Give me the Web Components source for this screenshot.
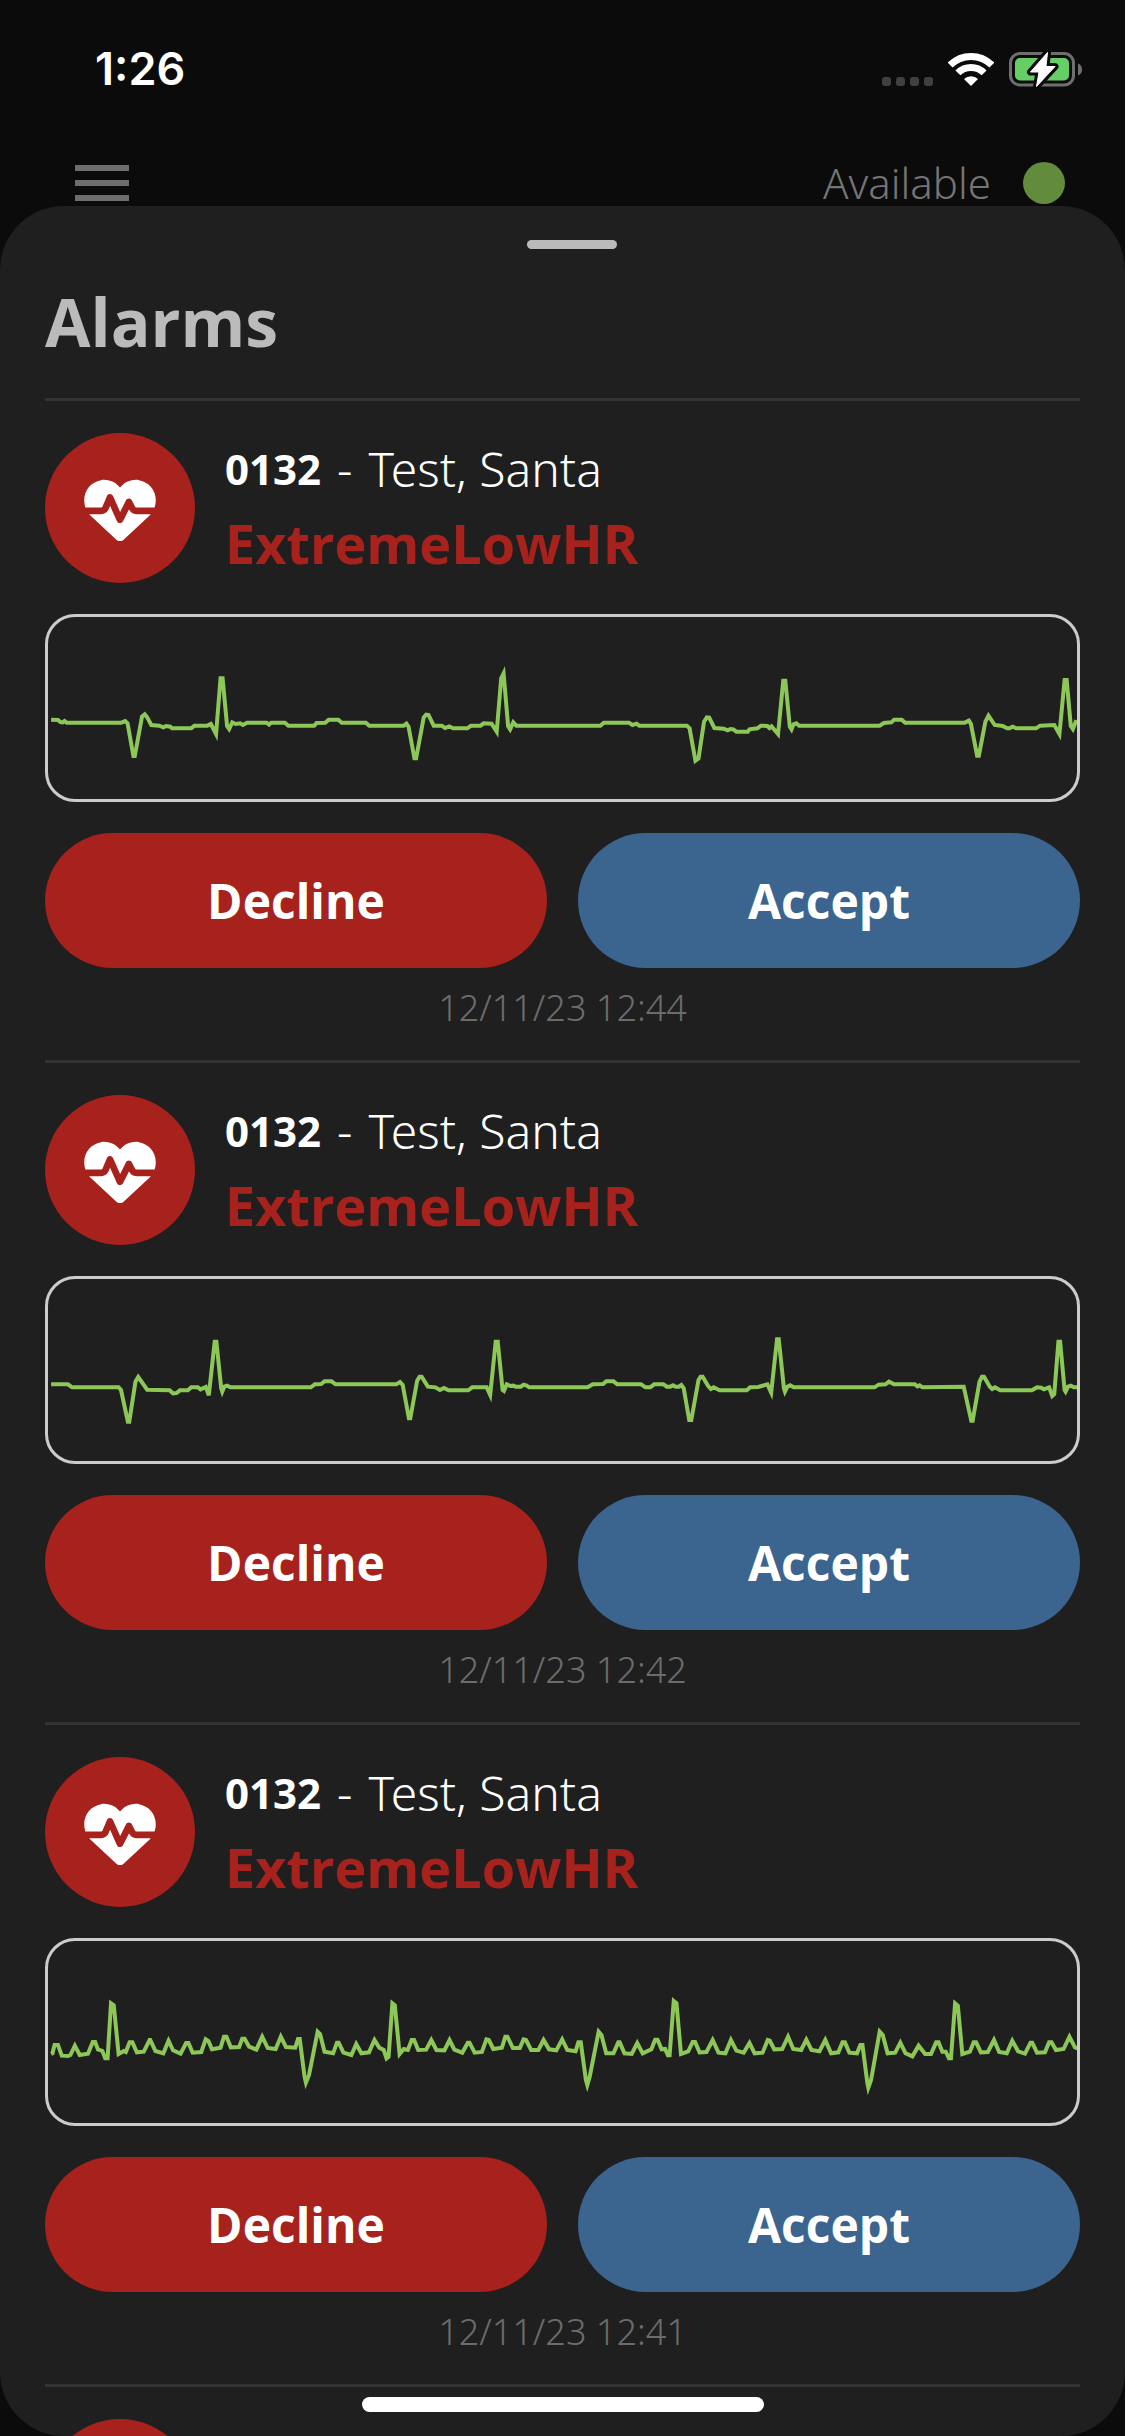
<!DOCTYPE html>
<html lang="en">
<head>
<meta charset="utf-8">
<meta name="viewport" content="width=device-width, initial-scale=1">
<title>Alarms</title>
<style>
  body {
    margin: 0;
    background: #0b0b0b;
    color: #fff;
    font-family: "Open Sans", "Noto Sans", sans-serif;
    --light: "Noto Sans", "Open Sans", sans-serif;
    --red: #a7211d;
  }
</style>
</head>
<body>
<alarm-app>
  <status-bar slot="status" time="1:26"></status-bar>
  <app-header slot="header">Available</app-header>
  <bottom-sheet heading="Alarms">
    <alarm-card room="0132" patient="Test, Santa" alarm="ExtremeLowHR" time="12/11/23 12:44">
      <ecg-trace points="61,359 81,360 88,366 95,367 100,363 106,368 265,368 276,363 283,370 300,468 304,468 325,350 333,343 340,352 352,375 375,377 387,382 395,378 407,380 412,385 468,385 477,377 515,377 525,372 540,402 553,235 559,235 572,378 578,387 587,367 597,372 610,370 618,375 630,368 687,368 694,374 700,368 740,368 750,377 825,377 832,369 857,368 867,359 895,359 905,368 975,368 985,377 1085,377 1093,371 1099,380 1116,475 1121,475 1143,352 1150,344 1157,345 1172,377 1195,377 1205,384 1217,379 1228,385 1270,385 1280,377 1308,377 1317,370 1340,371 1355,395 1368,235 1375,220 1388,378 1394,388 1403,367 1412,377 1656,377 1666,368 1739,368 1749,375 1761,371 1769,377 1907,377 1915,385 1932,482 1941,475 1957,365 1965,352 1972,353 1987,384 2014,386 2026,391 2034,387 2042,388 2051,395 2084,395 2089,388 2112,385 2122,377 2141,378 2147,384 2153,379 2172,402 2187,242 2193,242 2206,380 2211,388 2217,373 2225,370 2233,377 2467,377 2479,369 2501,367 2509,359 2531,359 2541,368 2714,368 2726,362 2732,372 2750,467 2755,467 2774,365 2783,347 2801,375 2824,378 2837,385 2844,385 2853,380 2864,385 2921,385 2933,377 2974,375 2989,402 3004,240 3010,240 3022,378 3028,387 3036,366 3042,368"></ecg-trace>
    </alarm-card>
    <alarm-card room="0132" patient="Test, Santa" alarm="ExtremeLowHR" time="12/11/23 12:42">
      <ecg-trace points="61,367 110,367 122,376 257,376 264,384 284,479 288,479 306,359 314,345 340,383 405,385 415,394 425,393 435,385 458,385 468,376 487,376 495,382 510,375 519,400 536,239 541,239 555,379 558,389 564,374 572,371 582,376 815,376 827,367 845,366 855,358 875,358 887,367 1063,367 1074,360 1082,369 1100,469 1104,469 1124,356 1131,344 1137,344 1155,374 1177,376 1190,384 1202,378 1215,385 1272,385 1284,376 1326,376 1336,399 1352,239 1358,239 1372,384 1376,387 1384,367 1395,372 1403,371 1410,374 1425,374 1433,368 1442,371 1449,376 1619,376 1634,367 1664,366 1673,358 1694,358 1705,367 1774,367 1787,376 1801,376 1812,367 1839,367 1849,374 1859,374 1867,370 1874,374 1884,374 1891,369 1898,379 1914,474 1920,474 1941,354 1947,344 1953,344 1969,372 1977,381 1985,376 2002,385 2081,385 2091,376 2114,375 2141,367 2152,392 2169,232 2174,232 2189,379 2192,389 2199,374 2207,370 2217,376 2452,376 2464,368 2484,367 2494,359 2509,367 2569,367 2577,373 2583,370 2591,376 2711,374 2733,476 2737,476 2757,359 2764,344 2770,344 2787,374 2794,381 2802,376 2817,385 2909,385 2924,376 2936,377 2944,382 2959,376 2968,402 2974,396 2986,239 2991,239 3004,384 3007,389 3014,374 3022,371 3031,376 3042,376"></ecg-trace>
    </alarm-card>
    <alarm-card room="0132" patient="Test, Santa" alarm="ExtremeLowHR" time="12/11/23 12:41">
      <ecg-trace points="61,390 65,388 71,363 81,363 92,395 110,396 117,393 130,365 144,393 168,389 182,354 189,354 197,376 210,381 218,403 225,403 235,238 243,244 257,390 272,381 278,384 289,355 297,355 310,385 330,383 347,348 349,348 364,381 387,388 402,350 415,379 437,389 453,357 460,357 472,386 497,384 510,346 518,351 528,376 553,371 563,338 570,338 583,370 607,369 616,344 623,344 636,368 657,377 674,338 690,372 713,375 728,338 743,369 770,371 778,345 783,345 797,458 801,476 810,453 835,323 842,330 855,383 880,388 891,356 896,356 910,386 933,393 947,360 962,388 984,385 1000,348 1014,371 1027,378 1035,403 1041,398 1052,238 1059,244 1073,390 1085,375 1097,378 1108,348 1115,348 1127,378 1150,377 1165,348 1180,378 1203,379 1218,348 1232,377 1255,386 1271,356 1276,356 1291,386 1312,384 1325,346 1332,348 1345,375 1370,371 1380,338 1386,338 1402,372 1422,372 1433,346 1440,348 1455,378 1476,378 1491,348 1507,376 1528,379 1545,346 1560,378 1584,382 1592,355 1599,355 1614,468 1618,483 1625,458 1651,323 1659,333 1673,388 1694,388 1708,355 1712,355 1726,388 1747,390 1763,357 1779,388 1804,376 1815,347 1822,347 1834,376 1844,375 1852,394 1857,394 1869,231 1877,238 1890,390 1911,382 1924,354 1931,354 1944,385 1964,384 1982,348 1999,386 2019,388 2035,348 2051,380 2072,386 2089,357 2104,388 2127,386 2142,348 2148,350 2161,376 2184,375 2201,338 2216,375 2239,378 2254,347 2269,378 2292,382 2309,348 2326,388 2347,385 2359,355 2366,355 2379,386 2401,388 2411,363 2417,363 2431,475 2434,491 2442,468 2467,323 2476,333 2490,388 2512,386 2527,356 2542,388 2562,397 2580,365 2599,390 2616,390 2631,355 2638,355 2649,383 2659,383 2668,403 2674,403 2686,238 2694,245 2707,390 2729,383 2740,355 2747,355 2761,385 2781,384 2799,348 2814,384 2836,388 2852,350 2869,382 2889,389 2905,356 2910,356 2924,386 2947,385 2959,355 2966,355 2979,378 3001,375 3018,338 3034,370 3042,373"></ecg-trace>
    </alarm-card>
    <alarm-card room="0132" patient="Test, Santa" alarm="ExtremeLowHR" time="12/11/23 12:40">
      <ecg-trace points="61,367 3042,367"></ecg-trace>
    </alarm-card>
  </bottom-sheet>
</alarm-app>

<script>
const define = (name, html, setup) => {
  const template = document.createElement('template');
  template.innerHTML = html;
  customElements.define(name, class extends HTMLElement {
    connectedCallback() {
      if (this.shadowRoot) return;
      const root = this.attachShadow({ mode: 'open' });
      root.append(template.content.cloneNode(true));
      if (setup) setup(this, root);
    }
  });
};

// Copies attributes of the host into the elements marked with data-text.
const fillText = (host, root) => {
  root.querySelectorAll('[data-text]').forEach(el => {
    el.textContent = host.getAttribute(el.dataset.text);
  });
};

define('alarm-app', `
  <style>
    :host { display: flex; flex-direction: column; position: relative; height: 100vh; overflow: hidden; }
    .home {
      position: absolute; bottom: 24px; left: 50%; margin-left: -201px;
      width: 402px; height: 15px; border-radius: 8px; background: #fff;
    }
  </style>
  <slot name="status"></slot>
  <slot name="header"></slot>
  <slot></slot>
  <div class="home"></div>
`);

define('status-bar', `
  <style>
    :host {
      display: flex; align-items: center; justify-content: space-between;
      flex: none; box-sizing: border-box; height: 138px; padding: 0 43px 0 95px;
      font: 600 45px/56px Inter, "Liberation Sans", sans-serif;
    }
    .icons { display: flex; align-items: flex-end; gap: 15px; }
    svg { display: block; }
  </style>
  <span data-text="time"></span>
  <div class="icons">
    <svg width="51" height="35" viewBox="0 0 51 35" fill="#404040" aria-hidden="true">
      <rect x="0" y="25" width="9" height="9" rx="3"/><rect x="14" y="25" width="9" height="9" rx="3"/>
      <rect x="28" y="25" width="9" height="9" rx="3"/><rect x="42" y="25" width="9" height="9" rx="3"/>
    </svg>
    <svg width="46" height="35" viewBox="0 0 46 35" role="img" aria-label="Wi-Fi">
      <g fill="none" stroke="#fff" stroke-width="7">
        <path d="M2.1 13.1A29.5 29.5 0 0 1 43.9 13.1"/>
        <path d="M9.9 20.9A18.5 18.5 0 0 1 36.1 20.9"/>
      </g>
      <path d="M23 34 16 27a10 10 0 0 1 14 0z" fill="#fff"/>
    </svg>
    <svg width="73" height="35" viewBox="0 0 73 35" role="img" aria-label="Battery charging">
      <rect x="1.5" y="1.5" width="63" height="31.5" rx="9.5" fill="none" stroke="#6f6f6f" stroke-width="3"/>
      <path d="M69 11.5q4 1.5 4 6t-4 6z" fill="#6f6f6f"/>
      <rect x="6" y="6" width="54" height="22.5" rx="5" fill="#65cf66"/>
      <path d="M38.5.5 21.5 20h8.5l-2.5 14.5L46 14.5h-9z" fill="#fff" stroke="#0b0b0b" stroke-width="7" stroke-linejoin="round"/>
      <path d="M38.5.5 21.5 20h8.5l-2.5 14.5L46 14.5h-9z" fill="#fff" stroke="#fff" stroke-width="1" stroke-linejoin="round"/>
    </svg>
  </div>
`, fillText);

define('app-header', `
  <style>
    :host {
      display: flex; align-items: center; justify-content: space-between;
      flex: none; box-sizing: border-box; height: 90px; padding: 0 60px 0 75px;
      color: #757575; font: 300 42px/58px var(--light);
    }
    button { display: flex; flex-direction: column; gap: 9px; padding: 0; border: 0; background: none; }
    button i { width: 54px; height: 6px; background: #6d6d6d; }
    .state { display: flex; align-items: center; gap: 32px; }
    .dot { width: 42px; height: 42px; border-radius: 50%; background: #628b3c; }
  </style>
  <button type="button" aria-label="Menu"><i></i><i></i><i></i></button>
  <div class="state"><slot></slot><span class="dot"></span></div>
`);

define('bottom-sheet', `
  <style>
    :host {
      display: flex; flex-direction: column; flex: 1; min-height: 0; overflow: hidden;
      position: relative; margin-top: -22px; padding: 34px 45px 0; border-radius: 64px;
      background: #1f1f1f;
    }
    .handle {
      flex: none; align-self: center; width: 90px; height: 9px; margin-left: 18px;
      border-radius: 5px; background: #bbb;
    }
    h1 { flex: none; margin: 27px 0 32px; color: #bbb; font-size: 66px; font-weight: 700; line-height: 90px; }
  </style>
  <div class="handle"></div>
  <h1 data-text="heading"></h1>
  <slot></slot>
`, fillText);

define('alarm-card', `
  <style>
    :host {
      display: flex; flex-direction: column; flex: none; gap: 31px;
      border-top: 3px solid #333; padding-top: 32px;
    }
    .who { display: flex; align-items: center; gap: 30px; }
    .badge {
      display: flex; align-items: center; justify-content: center; flex: none;
      box-sizing: border-box; width: 150px; height: 150px; padding-top: 4px;
      border-radius: 50%; background: var(--red);
    }
    .patient { display: flex; align-items: center; gap: 16px; font: 300 48px/66px var(--light); }
    .patient b { font: 700 42px/58px "Open Sans", "Noto Sans", sans-serif; }
    .alarm { margin-top: 4px; color: var(--red); font-size: 54px; font-weight: 700; line-height: 74px; }
    .actions { display: flex; gap: 31px; }
    button {
      flex: 1; height: 135px; padding: 0; border: 0; border-radius: 68px;
      background: var(--red); color: #fff; font: 700 48px/66px "Open Sans", "Noto Sans", sans-serif;
    }
    .accept { background: #3b648f; }
    time {
      height: 61px; margin-top: -16px; padding-bottom: 16px;
      color: #6c6c6c; font: 300 36px/50px var(--light); text-align: center;
    }
  </style>
  <div class="who">
    <div class="badge">
      <svg width="72" height="62" viewBox="0 36 512 444" fill="#fff" aria-hidden="true">
        <path d="M228.3 469.1L47.6 300.4c-4.2-3.9-8.2-8.1-11.9-12.4h87c22.6 0 43-13.6 51.7-34.5l10.5-25.2 49.3 109.5c3.8 8.5 12.1 14 21.4 14.1s17.8-5 22-13.3L320 253.7l1.7 3.4c9.5 19 28.9 31 50.1 31H476.3c-3.7 4.3-7.7 8.5-11.9 12.4L283.7 469.1c-7.5 7-17.4 10.9-27.7 10.9s-20.2-3.9-27.7-10.9zM503.7 240h-132c-3 0-5.8-1.7-7.2-4.4l-23.2-46.3c-4.1-8.1-12.4-13.3-21.5-13.3s-17.4 5.1-21.5 13.3l-41.4 82.8L205.9 158.2c-3.9-8.7-12.7-14.3-22.2-14.1s-18.1 5.9-21.8 14.8l-31.8 76.3c-1.2 3-4.2 4.9-7.4 4.9H16c-2.6 0-5 .4-7.3 1.1C3 225.2 0 208.2 0 190.9v-5.8c0-69.9 50.5-129.5 119.4-141C165 36.5 211.4 51.4 244 84l12 12 12-12c32.6-32.6 79-47.5 124.6-39.9C461.5 55.6 512 115.2 512 185.1v5.8c0 16.9-2.8 33.5-8.3 49.1z"/>
      </svg>
    </div>
    <div>
      <div class="patient"><b data-text="room"></b><span>-</span><span data-text="patient"></span></div>
      <div class="alarm" data-text="alarm"></div>
    </div>
  </div>
  <slot></slot>
  <div class="actions">
    <button type="button">Decline</button>
    <button type="button" class="accept">Accept</button>
  </div>
  <time data-text="time"></time>
`, fillText);

define('ecg-trace', `
  <style>
    :host {
      display: block; box-sizing: border-box; height: 188px; overflow: hidden;
      border: 3px solid #ccc; border-radius: 30px;
    }
    svg { display: block; width: 100%; height: 100%; }
    polyline { fill: none; stroke: #8cc757; stroke-width: 4px; vector-effect: non-scaling-stroke; }
  </style>
  <svg viewBox="52 51 2988 546" preserveAspectRatio="none" role="img" aria-label="ECG trace"><polyline/></svg>
`, (host, root) => {
  root.querySelector('polyline').setAttribute('points', host.getAttribute('points'));
});
</script>
</body>
</html>
